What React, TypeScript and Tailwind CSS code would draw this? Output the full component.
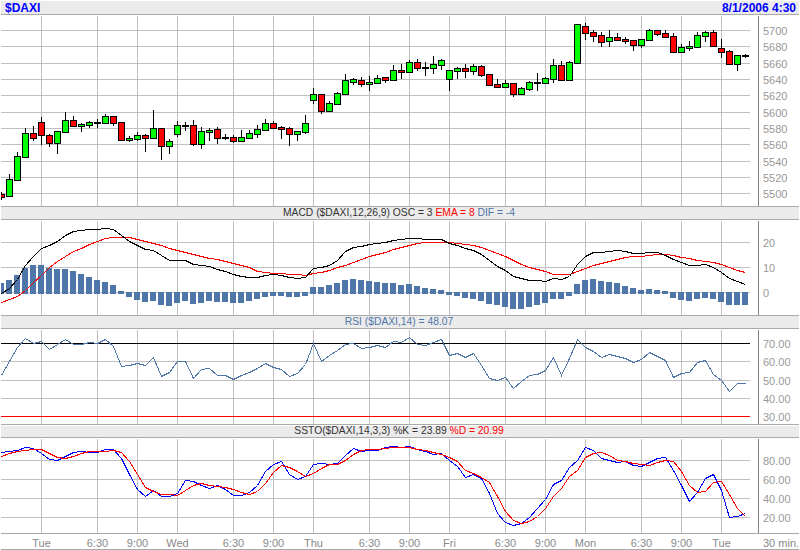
import type { ReactNode } from "react"

// All series are read off the 3x crops, hence the "z" units: pixel = offset + z / 3
type Candle = [number, number, number, number, "g" | "r" | "k"]

const CANDLES: Candle[] = [
  [578, 597, 582, 592, "r"], [522, 590, 538, 590, "g"], [456, 541, 469, 541, "g"], [384, 472, 400, 472, "g"],
  [378, 422, 400, 415, "r"], [351, 434, 367, 406, "r"], [402, 440, 406, 431, "r"], [394, 461, 394, 431, "g"],
  [336, 398, 361, 398, "g"], [348, 380, 361, 380, "r"], [370, 395, 373, 380, "g"], [364, 381, 367, 377, "g"],
  [357, 381, 367, 371, "k"], [343, 371, 349, 371, "g"], [349, 377, 349, 371, "r"], [367, 422, 367, 422, "r"],
  [409, 425, 415, 422, "g"], [396, 421, 406, 419, "g"], [403, 455, 406, 416, "r"], [330, 416, 385, 416, "g"],
  [385, 479, 385, 440, "r"], [418, 461, 424, 440, "g"], [364, 410, 376, 404, "g"], [366, 392, 376, 380, "k"],
  [360, 437, 376, 434, "r"], [382, 446, 394, 434, "g"], [385, 422, 391, 398, "g"], [382, 429, 388, 416, "r"],
  [403, 419, 412, 416, "k"], [406, 426, 412, 425, "r"], [391, 425, 412, 425, "g"], [391, 416, 400, 416, "g"],
  [376, 413, 388, 404, "g"], [358, 392, 370, 392, "g"], [364, 386, 370, 385, "r"], [379, 414, 382, 388, "r"],
  [382, 437, 385, 403, "r"], [394, 422, 394, 403, "g"], [346, 401, 370, 398, "g"], [265, 311, 283, 301, "g"],
  [283, 341, 283, 334, "r"], [304, 335, 310, 334, "g"], [277, 314, 280, 313, "g"], [222, 284, 241, 283, "g"],
  [235, 252, 238, 247, "g"], [232, 260, 241, 253, "r"], [228, 270, 247, 253, "g"], [226, 250, 235, 250, "g"],
  [232, 248, 232, 241, "r"], [195, 241, 211, 241, "g"], [192, 234, 211, 217, "r"], [181, 217, 187, 217, "g"],
  [177, 212, 187, 205, "r"], [186, 225, 202, 205, "k"], [168, 219, 193, 205, "g"], [178, 209, 181, 196, "g"],
  [211, 270, 211, 238, "g"], [202, 236, 205, 214, "g"], [192, 231, 205, 214, "r"], [193, 224, 199, 214, "g"],
  [196, 228, 199, 227, "r"], [223, 256, 223, 256, "r"], [237, 263, 253, 263, "r"], [240, 262, 250, 262, "g"],
  [250, 288, 250, 283, "r"], [262, 284, 265, 283, "g"], [244, 272, 247, 268, "g"], [219, 270, 247, 250, "k"],
  [233, 251, 235, 250, "g"], [177, 246, 196, 238, "g"], [183, 241, 196, 241, "r"], [183, 241, 187, 241, "g"],
  [73, 190, 73, 190, "g"], [70, 117, 79, 100, "r"], [90, 123, 97, 109, "r"], [97, 138, 106, 127, "r"],
  [90, 138, 112, 124, "g"], [99, 122, 112, 121, "r"], [112, 129, 118, 124, "r"], [121, 150, 121, 136, "r"],
  [118, 143, 118, 136, "g"], [87, 121, 91, 121, "g"], [90, 106, 91, 103, "r"], [90, 112, 100, 112, "r"],
  [99, 157, 109, 157, "r"], [133, 157, 142, 157, "g"], [124, 152, 139, 145, "g"], [97, 143, 106, 143, "g"],
  [94, 124, 97, 109, "g"], [91, 139, 97, 139, "r"], [118, 173, 145, 157, "r"], [151, 193, 154, 193, "r"],
  [165, 210, 166, 193, "g"], [163, 171, 166, 170, "k"],
]

const OSC = [
  234, 225, 210, 189, 180, 180, 189, 192, 192, 198, 207, 216, 225, 231, 240, 258, 276, 285, 291, 288, 300, 303, 294,
  288, 297, 294, 288, 291, 291, 294, 294, 288, 282, 276, 273, 273, 276, 276, 273, 246, 246, 240, 234, 225, 222, 225,
  228, 231, 234, 234, 240, 237, 243, 249, 252, 255, 270, 273, 279, 282, 288, 297, 300, 306, 312, 312, 306, 300, 294,
  282, 282, 273, 237, 225, 222, 228, 231, 234, 243, 249, 255, 252, 255, 258, 279, 285, 288, 282, 279, 282, 291, 300,
  300, 300,
]
const MACD = [
  266, 250, 222, 180, 155, 130, 120, 108, 90, 79, 75, 73, 73, 70, 73, 92, 108, 121, 133, 136, 152, 165, 166, 166, 178,
  182, 184, 192, 198, 208, 213, 217, 216, 210, 208, 212, 218, 219, 216, 191, 187, 180, 165, 140, 128, 124, 119, 115,
  113, 106, 103, 100, 100, 103, 103, 103, 114, 121, 130, 136, 148, 166, 184, 196, 213, 220, 225, 226, 229, 220, 224,
  214, 177, 154, 143, 141, 138, 136, 139, 145, 146, 142, 142, 150, 163, 172, 181, 182, 178, 188, 202, 220, 229, 238,
]
const EMA = [
  291, 283, 273, 255, 232, 212, 188, 170, 154, 140, 129, 119, 108, 100, 97, 96, 98, 103, 109, 115, 122, 130, 136, 142,
  148, 154, 160, 164, 170, 175, 182, 188, 198, 201, 204, 205, 207, 209, 211, 206, 201, 197, 188, 180, 172, 163, 154,
  147, 141, 134, 128, 122, 116, 113, 112, 112, 113, 114, 118, 122, 128, 137, 145, 155, 166, 177, 186, 192, 200, 207,
  208, 208, 199, 190, 180, 174, 168, 163, 158, 154, 154, 150, 148, 148, 152, 157, 160, 166, 170, 173, 178, 186, 195,
  202,
]
const RSI = [
  182, 140, 97, 70, 84, 79, 103, 87, 73, 87, 88, 82, 85, 72, 93, 154, 151, 145, 151, 127, 184, 172, 139, 139, 190, 162,
  159, 180, 181, 193, 181, 172, 160, 145, 157, 162, 184, 176, 148, 85, 139, 122, 105, 87, 85, 100, 96, 92, 97, 79, 82,
  68, 87, 91, 81, 73, 121, 115, 127, 114, 150, 190, 196, 187, 219, 198, 180, 178, 166, 127, 181, 130, 73, 97, 108, 127,
  118, 124, 130, 142, 133, 112, 124, 136, 187, 175, 172, 142, 136, 178, 196, 229, 205, 205,
]
const PCT_K = [
  412, 410, 406, 398, 401, 415, 433, 436, 425, 412, 409, 412, 412, 404, 404, 430, 478, 522, 544, 527, 544, 544, 535,
  496, 499, 510, 520, 510, 522, 541, 541, 532, 510, 470, 448, 438, 478, 492, 484, 448, 444, 448, 445, 420, 400, 408,
  406, 405, 397, 395, 396, 395, 404, 410, 418, 415, 436, 454, 487, 478, 490, 535, 595, 622, 631, 625, 606, 580, 553,
  508, 497, 457, 437, 397, 406, 430, 436, 441, 440, 451, 454, 442, 430, 427, 465, 510, 558, 532, 490, 478, 525, 607,
  604, 595,
]
const PCT_D = [
  424, 415, 409, 406, 402, 404, 415, 427, 431, 424, 414, 409, 409, 408, 407, 411, 440, 478, 516, 530, 538, 539, 540,
  526, 512, 504, 510, 513, 517, 523, 533, 539, 530, 505, 472, 452, 456, 470, 484, 475, 460, 448, 448, 437, 418, 406,
  404, 403, 401, 398, 397, 396, 402, 406, 411, 418, 428, 440, 465, 475, 487, 502, 545, 588, 615, 624, 620, 605, 580,
  545, 520, 485, 465, 428, 414, 412, 422, 435, 439, 445, 449, 451, 442, 435, 438, 468, 510, 533, 530, 502, 498, 538,
  580, 604,
]

// candle indexes where a session/time gridline falls
const TIME_LINES = [5, 12, 17, 22, 29, 34, 39, 46, 51, 56, 63, 68, 73, 80, 85, 90]
const TIME_LABELS = [
  "Tue", "6:30", "9:00", "Wed", "6:30", "9:00", "Thu", "6:30", "9:00", "Fri", "6:30", "9:00", "Mon", "6:30", "9:00", "Tue",
]

const cx = (k: number) => 1.5 + 8 * k
const snap = (base: number, z: number) => base + Math.floor(z / 3) + 0.5
const points = (base: number, data: number[]) => data.map((z, k) => `${cx(k)},${snap(base, z)}`).join(" ")

function Plot({ top, height, grid, children }: { top: number; height: number; grid: number[]; children: ReactNode }) {
  return (
    <svg width={757} height={height} viewBox={`1 ${top} 757 ${height}`} shapeRendering="crispEdges" className="block shrink-0">
      {grid.map((y) => (
        <line key={y} x1={1} x2={750} y1={y + 0.5} y2={y + 0.5} stroke="#c0c0c0" />
      ))}
      {TIME_LINES.map((k) => (
        <line key={k} x1={cx(k)} x2={cx(k)} y1={top + 1} y2={top + height} stroke="#c0c0c0" />
      ))}
      {children}
    </svg>
  )
}

function Axis({ top, height, labels }: { top: number; height: number; labels: [string, number][] }) {
  return (
    <div className="mt-px w-[41px] shrink-0 border-l border-[#808080]">
      <svg width={40} height={height - 1} viewBox={`759 ${top + 1} 40 ${height - 1}`} className="block">
        {labels.map(([text, y]) => (
          <text key={text} x={763} y={y} className="fill-[#999999] font-['Liberation_Sans'] text-[11px]">
            {text}
          </text>
        ))}
      </svg>
    </div>
  )
}

function TitleBar({ children, className }: { children: ReactNode; className: string }) {
  return (
    <div
      className={`flex items-center justify-center border-b border-[#aaaaaa] bg-[#ebebeb] pr-[2px] text-[10.3px] leading-none text-[#333333] ${className}`}
    >
      {children}
    </div>
  )
}

export default function App() {
  const priceLabels: [string, number][] = [
    30, 46, 63, 79, 95, 112, 128, 144, 161, 177, 193,
  ].map((y, i) => [String(5700 - i * 20), y + 5])

  return (
    <div className="h-[550px] w-[800px] overflow-hidden bg-white px-px pt-px font-['Liberation_Sans',sans-serif]">
      <div className="flex h-[14px] items-center justify-between border-b border-[#aaaaaa] bg-[#ebebeb] pl-1 pr-[3px] text-xs font-bold leading-none text-[#0000ff]">
        <span>$DAXI</span>
        <span>8/1/2006 4:30</span>
      </div>
      <div className="flex h-[192px] border-b border-[#aaaaaa]">
        <Plot top={15} height={191} grid={[30, 46, 63, 79, 95, 112, 128, 144, 161, 177, 193]}>
          {CANDLES.map(([hi, lo, top, bot, c], k) => (
            <g key={k}>
              <line x1={cx(k)} x2={cx(k)} y1={Math.floor(hi / 3)} y2={Math.floor(lo / 3) + 1} stroke="#000000" />
              <rect
                x={cx(k) - 3}
                y={snap(0, top)}
                width={6}
                height={Math.floor(bot / 3) - Math.floor(top / 3)}
                fill={c === "g" ? "#00ff00" : c === "r" ? "#ff0000" : "#000000"}
                stroke="#000000"
              />
            </g>
          ))}
        </Plot>
        <Axis top={15} height={191} labels={priceLabels} />
      </div>

      <TitleBar className="h-[13px]">
        <span className="whitespace-pre">MACD ($DAXI,12,26,9) OSC = 3 </span>
        <span className="whitespace-pre text-[#ff0000]">EMA = 8 </span>
        <span className="text-[#4f76a8]">DIF = -4</span>
      </TitleBar>
      <div className="flex h-[96px] border-b border-[#aaaaaa]">
        <Plot top={220} height={95} grid={[242, 267, 292]}>
          {OSC.map((z, k) => {
            const y = 205 + Math.floor(z / 3)
            const up = z < 264
            return (
              <rect key={k} x={1 + 8 * k - 3} width={6} y={up ? y : 292} height={up ? 294 - y : y - 292} fill="#4f76a8" />
            )
          })}
          <polyline points={points(205, EMA)} fill="none" stroke="#ff0000" />
          <polyline points={points(205, MACD)} fill="none" stroke="#000000" />
        </Plot>
        <Axis top={220} height={95} labels={[["20", 247], ["10", 272], ["0", 297]]} />
      </div>

      <TitleBar className="h-[13px]">
        <span className="text-[#4f76a8]">RSI ($DAXI,14) = 48.07</span>
      </TitleBar>
      <div className="flex h-[96px] border-b border-[#aaaaaa]">
        <Plot top={329} height={95} grid={[361, 380, 398]}>
          <line x1={1} x2={750} y1={343.5} y2={343.5} stroke="#000000" />
          <line x1={1} x2={750} y1={416.5} y2={416.5} stroke="#ff0000" />
          <polyline points={points(315, RSI)} fill="none" stroke="#4f76a8" />
        </Plot>
        <Axis
          top={329}
          height={95}
          labels={[["70.00", 348], ["60.00", 366], ["50.00", 385], ["40.00", 403], ["30.00", 421]]}
        />
      </div>

      <TitleBar className="mt-px h-[12px]">
        <span className="whitespace-pre">SSTO($DAXI,14,3,3) %K = 23.89 </span>
        <span className="text-[#ff0000]">%D = 20.99</span>
      </TitleBar>
      <div className="flex h-[96px] border-b border-[#aaaaaa]">
        <Plot top={438} height={95} grid={[460, 479, 498, 517]}>
          <polyline points={points(315, PCT_K)} fill="none" stroke="#0000ff" />
          <polyline points={points(315, PCT_D)} fill="none" stroke="#ff0000" />
        </Plot>
        <Axis top={438} height={95} labels={[["80.00", 465], ["60.00", 484], ["40.00", 503], ["20.00", 522]]} />
      </div>

      <div className="h-[16px] border-b border-[#aaaaaa]">
        <svg width={798} height={15} viewBox="1 534 798 15" className="block">
          {TIME_LABELS.map((label, i) => (
            <text
              key={i}
              x={cx(TIME_LINES[i])}
              y={547}
              textAnchor="middle"
              className="fill-[#888888] font-['Liberation_Sans'] text-[11px]"
            >
              {label}
            </text>
          ))}
          <text x={763} y={547} className="fill-[#888888] font-['Liberation_Sans'] text-[11px]">
            30 min.
          </text>
        </svg>
      </div>
    </div>
  )
}
